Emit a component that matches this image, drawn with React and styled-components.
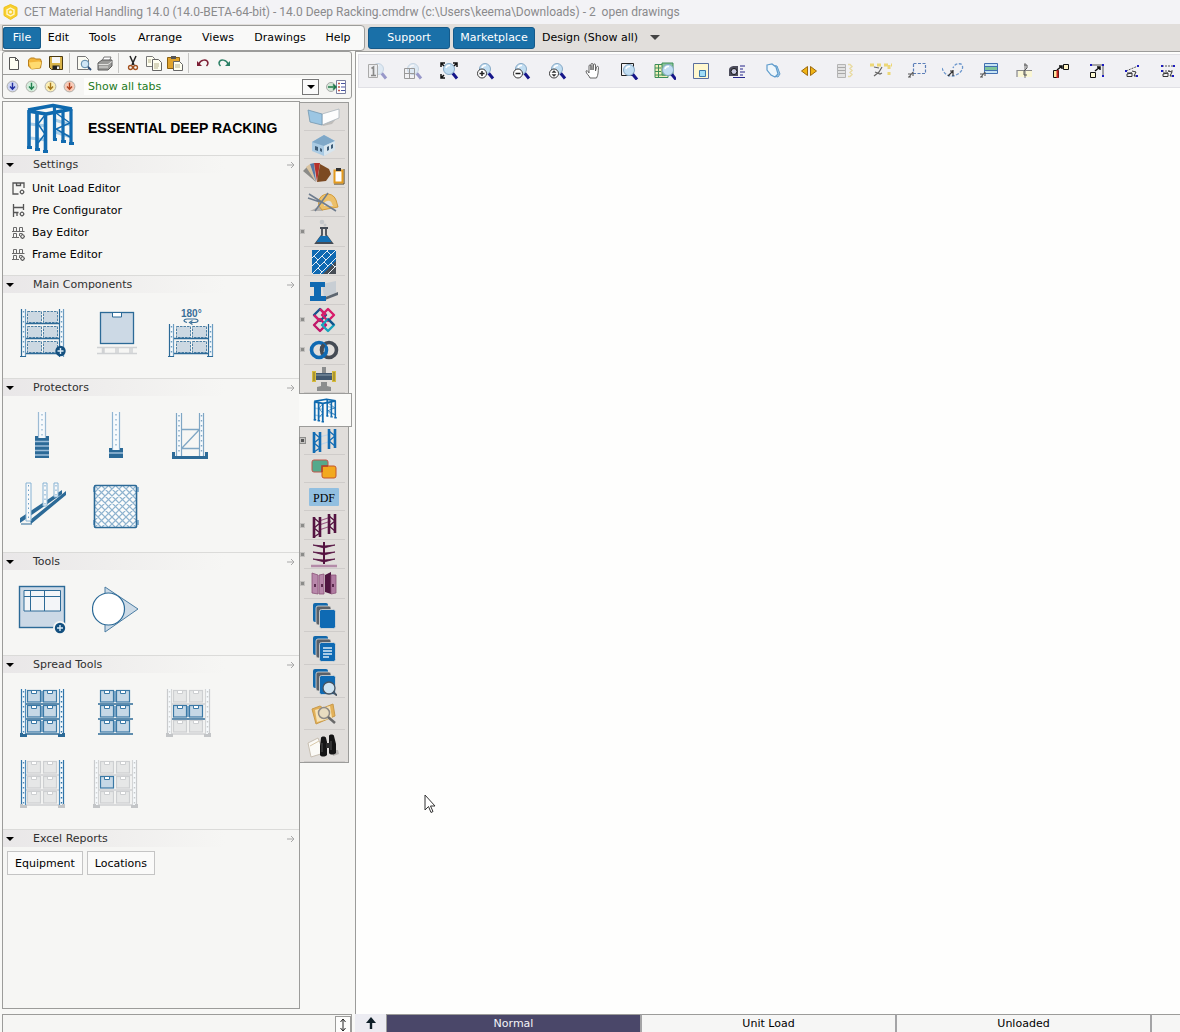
import React from "react";
import styled, { createGlobalStyle } from "styled-components";

const UI_FONT = `"DejaVu Sans", Verdana, sans-serif`;
const LINE = "#9c9c9a";
const BRAND = "#1a70a8";
const PANEL = "#f6f6f4";
const INK = "#2c6a97";
const SOFT = "#c6d8e6";

const GlobalStyle = createGlobalStyle`
  *, *::before, *::after { box-sizing: border-box; }
  body { margin: 0; background: #f8f8f6; font-family: ${UI_FONT}; font-size: 11px; color: #000; overflow: hidden; }
  button, select { font: inherit; color: inherit; background: none; border: 0; margin: 0; padding: 0; }
  h1, h2 { margin: 0; font: inherit; }
  svg { display: block; flex: none; }
`;

/* ---------- layout ---------- */
const Shell = styled.div`
  height: 100vh;
  display: flex;
  flex-direction: column;
`;
const TitleBar = styled.header`
  display: flex;
  align-items: center;
  gap: 6px;
  height: 24px;
  padding: 0 3px;
  background: #f3f3f6;
  color: #8a8a8c;
  font: 12px/24px Roboto, "Open Sans", sans-serif;
  white-space: pre;
`;
const MenuBar = styled.div`
  display: flex;
  align-items: center;
  height: 27px;
  flex: none;
  padding-left: 2px;
  gap: 3px;
  background: #e1dedb;
`;
const Menu = styled.nav`
  display: flex;
  align-items: center;
  height: 26px;
  width: 363px;
  background: #f9f9f8;
  border: 1px solid ${LINE};
  border-radius: 0 4px 4px 0;
`;
const MenuItem = styled.button`
  height: 22px;
  width: ${(p) => p.$w}px;
  text-align: center;
  border-radius: 3px;
  ${(p) => p.$active && `background: ${BRAND}; color: #fff; box-shadow: inset 0 0 0 1px #155a8a;`}
`;
const BarButton = styled.button`
  height: 22px;
  width: 82px;
  color: #fff;
  background: ${BRAND};
  border: 1px solid #155a8a;
  border-radius: 3px;
`;
const PlainSelect = styled.label`
  display: flex;
  align-items: center;
  gap: 12px;
  padding-left: 4px;
  select { appearance: none; field-sizing: content; }
`;
const Workspace = styled.div`
  flex: 1;
  min-height: 0;
  display: flex;
`;
const Side = styled.aside`
  width: 355px;
  flex: none;
  padding: 0 3px 0 2px;
  display: flex;
  flex-direction: column;
`;
const ToolPanel = styled.div`
  flex: none;
  border: 1px solid ${LINE};
  border-radius: 3px;
  background: ${PANEL};
`;
const ToolRow = styled.div`
  display: flex;
  align-items: center;
  height: 22px;
  & + & { border-top: 1px solid ${LINE}; height: 24px; }
`;
const SmallTool = styled.button`
  width: ${(p) => p.$w || 21}px;
  height: 20px;
  display: grid;
  place-items: center;
`;
const Divider = styled.span`
  width: 1px;
  height: 20px;
  margin: 0 3px;
  background: #c6c6c4;
`;
const TabFilter = styled.label`
  display: flex;
  align-items: center;
  flex: 1;
  height: 17px;
  margin: 0 2px 0 5px;
  padding-left: 4px;
  background: #fdfdfb;
  color: #1c7a22;
  select { appearance: none; flex: 1; height: 17px; }
`;
const DropBox = styled.span`
  width: 17px;
  height: 16px;
  display: grid;
  place-items: center;
  border: 1px solid #777;
  background: #fafafa;
`;
const Middle = styled.div`
  flex: 1;
  min-height: 0;
  display: flex;
  align-items: stretch;
  margin-top: 2px;
`;
const Catalog = styled.div`
  width: 298px;
  border: 1px solid ${LINE};
  background: ${PANEL};
`;
const Brand = styled.div`
  display: flex;
  align-items: center;
  height: 53px;
  padding: 0 0 1px 21px;
  gap: 12px;
  background: #f8f8f6;
  h1 { font: bold 14px/20px "Liberation Sans", Arial, sans-serif; }
`;
const SectionHead = styled.button`
  display: flex;
  align-items: center;
  width: 100%;
  height: 18px;
  padding: 0 4px 0 3px;
  border-top: 1px solid #dbdbd9;
  background: linear-gradient(90deg, #e9e7e8 0, #efeeed 35%, ${PANEL} 75%);
  color: #303030;
  span { flex: 1; text-align: left; padding-left: 19px; }
`;
const LinkList = styled.div`
  display: flex;
  flex-direction: column;
  padding: 4px 0 10px 9px;
`;
const LinkRow = styled.button`
  display: flex;
  align-items: center;
  gap: 7px;
  height: 22px;
`;
const IconGrid = styled.div`
  display: grid;
  grid-template-columns: repeat(3, 74px);
  grid-auto-rows: 71px;
  padding: 4px 0 10px 3px;
`;
const IconCell = styled.button`
  display: grid;
  place-items: center;
`;
const ReportRow = styled.div`
  display: flex;
  gap: 4px;
  padding: 4px;
`;
const ReportButton = styled.button`
  height: 24px;
  padding: 0 7px;
  border: 1px solid #c4c4c4;
  background: #fafaf9;
`;
const TabStrip = styled.div`
  width: 49px;
  align-self: flex-start;
  margin-top: 1px;
  background: #e1dedb;
  border: solid ${LINE};
  border-width: 1px 1px 1px 0;
`;
const SideTab = styled.button`
  position: relative;
  display: grid;
  place-items: center;
  width: 48px;
  height: ${(p) => p.$h}px;
  &::after { content: ""; position: absolute; left: 4px; right: 3px; bottom: 0; height: 1px; background: #cfccca; }
  ${(p) =>
    p.$selected &&
    `width: 53px; margin-left: -1px; background: #fafaf8; border: 1px solid ${LINE}; border-left: 0; &::after { display: none; }`}
`;
const Pin = styled.span`
  position: absolute;
  left: 0;
  top: 50%;
  width: 5px;
  height: 5px;
  margin-top: -3px;
  background: #8c8c8a;
  border: 1px solid #c4c2c0;
  ${(p) => p.$boxed && `outline: 1px solid #8c8c8a; background: #555;`}
`;
const StatusBox = styled.div`
  flex: none;
  display: flex;
  justify-content: flex-end;
  height: 18px;
  margin-top: 5px;
  border: 1px solid ${LINE};
  border-bottom: 0;
  background: ${PANEL};
`;
const Stepper = styled.button`
  width: 16px;
  margin-top: 1px;
  border: 1px solid ${LINE};
  border-bottom: 0;
  background: #fdfdfc;
  display: grid;
  place-items: center;
`;
const Main = styled.main`
  flex: 1;
  min-width: 0;
  display: flex;
  flex-direction: column;
  border-top: 1px solid ${LINE};
`;
const Canvas = styled.section`
  position: relative;
  flex: 1;
  min-height: 0;
  padding: 2px 0 0 2px;
  background: #fefefd;
  border-left: 1px solid ${LINE};
`;
const ViewBar = styled.div`
  display: flex;
  align-items: center;
  height: 34px;
  overflow: hidden;
  background: #f1f1f4;
  border: 1px solid #e0e0e5;
  border-right: 0;
`;
const ViewTool = styled.button`
  flex: none;
  width: 36px;
  height: 32px;
  display: grid;
  place-items: center;
`;
const Pointer = styled.span`
  position: absolute;
  left: 68px;
  top: 742px;
`;
const SheetBar = styled.div`
  flex: none;
  display: flex;
  height: 18px;
  overflow: hidden;
`;
const UpButton = styled.button`
  width: 32px;
  flex: none;
  display: grid;
  place-items: center;
  background: #ececf2;
  border-right: 1px solid ${LINE};
`;
const SheetTab = styled.button`
  flex: none;
  width: 255px;
  border-top: 1px solid ${LINE};
  border-right: 2px solid #a4a4a6;
  background: ${(p) => (p.$active ? "#4a4769" : "#f6f6f5")};
  color: ${(p) => (p.$active ? "#f4f4f8" : "#000")};
`;

/* ---------- small drawings ---------- */
const Svg = ({ w = 18, h = w, vb, children }) => (
  <svg width={w} height={h} viewBox={vb || `0 0 ${w} ${h}`} fill="none" aria-hidden="true">
    {children}
  </svg>
);
const Caret = ({ c = "#000", w = 8 }) => (
  <Svg w={w} h={w / 2} vb="0 0 8 4">
    <path d="M0 0h8L4 4z" fill={c} />
  </Svg>
);
const AppLogo = () => (
  <Svg w={15} h={16}>
    <path d="M7.500 .5 14 3.500v8L7.500 15.500 1 11.500v-8z" fill="#f7cf2e" stroke="#efc21c" />
    <path d="M7.500 4 11 6v4l-3.500 2L4 10V6z" stroke="#fff6cc" strokeWidth="1.400" />
    <circle cx="7.500" cy="8" r="1.500" fill="#fff6cc" />
  </Svg>
);

const fileIcons = {
  New: (
    <Svg w={16}>
      <path d="M3.500 2.500h6l3 3v9h-9z" fill="#fffff4" stroke="#555" />
      <path d="M9.500 2.500v3h3" stroke="#555" />
    </Svg>
  ),
  Open: (
    <Svg w={16}>
      <path d="M1.500 5l2-2h4l1 1h5l1 3-1 6-9 1-3-3z" fill="#f3b53a" stroke="#b9801c" />
      <path d="M2 7.500l10-1 2.500 1-2 5.500-8 1z" fill="#ffdb70" />
    </Svg>
  ),
  Save: (
    <Svg w={16}>
      <path d="M1.500 1.500h13v13h-11l-2-2z" fill="#d9b44a" stroke="#4b3a12" />
      <path d="M4 2h8v6H4z" fill="#f6f6f6" />
      <path d="M4.500 10.500h7v4h-7z" fill="#222" />
      <path d="M9 11.500h2v2.500H9z" fill="#eee" />
    </Svg>
  ),
  Preview: (
    <Svg w={16}>
      <path d="M1.500 1.500h8l3 3v10h-11z" fill="#fbfbf2" stroke="#777" />
      <circle cx="9" cy="9" r="3.800" fill="#cfe6f5" stroke="#5b87a8" />
      <path d="M12 12l3 3" stroke="#2f4f78" strokeWidth="2" />
    </Svg>
  ),
  Print: (
    <Svg w={16}>
      <path d="M5 6l2-4h7l-2 5z" fill="#fff" stroke="#777" />
      <path d="M1 8l4-3h10v6l-4 4H1z" fill="#9a9a98" stroke="#5d5d5c" />
      <path d="M1.500 9.500H11l4-3M2 12h9" stroke="#e0e0de" />
    </Svg>
  ),
  Cut: (
    <Svg w={16}>
      <path d="M5 1l4 9M11 1L7 10" stroke="#222" strokeWidth="1.500" />
      <circle cx="5.500" cy="12.500" r="2" stroke="#a3501d" strokeWidth="1.300" />
      <circle cx="10.500" cy="12.500" r="2" stroke="#a3501d" strokeWidth="1.300" />
    </Svg>
  ),
  Copy: (
    <Svg w={16}>
      <path d="M.5 1.500h6l2 2v8h-8z" fill="#fffff0" stroke="#777" />
      <path d="M6.500 4.500h6l3 3v8h-9z" fill="#fffff0" stroke="#666" />
      <path d="M2 5h3M2 7h3M8 9h5M8 11h5M8 13h4" stroke="#b5b08a" />
    </Svg>
  ),
  Paste: (
    <Svg w={16}>
      <path d="M.5 2.500h12v11H.5z" fill="#e0a32c" stroke="#8b6010" />
      <path d="M4 1h5v3H4z" fill="#555" />
      <path d="M6.500 6.500h6l3 3v6h-9z" fill="#fffff0" stroke="#666" />
      <path d="M8 10h5M8 12h5" stroke="#b5b08a" />
    </Svg>
  ),
  Undo: (
    <Svg w={16}>
      <path d="M4 9c1-4 8-6 9-1 0 1-.5 2-1.500 3" stroke="#7d1f35" strokeWidth="1.500" />
      <path d="M2 6v5h5z" fill="#7d1f35" />
    </Svg>
  ),
  Redo: (
    <Svg w={16}>
      <path d="M12 9C11 5 4 3 3 8c0 1 .5 2 1.500 3" stroke="#2d8066" strokeWidth="1.500" />
      <path d="M14 6v5H9z" fill="#2d8066" />
    </Svg>
  ),
};

const Level = ({ fill, stroke }) => (
  <Svg w={13}>
    <circle cx="6.500" cy="6.500" r="5.400" fill={fill} stroke="#b0b0aa" />
    <path d="M6.500 2.800v6M4 6.500l2.500 2.800L9 6.500" stroke={stroke} strokeWidth="1.400" />
  </Svg>
);
const TabListIcon = () => (
  <Svg w={20} h={14}>
    <circle cx="5" cy="7" r="4.500" fill="#d5e8d8" stroke="#aaa" />
    <path d="M10.500 .5h9v13h-9z" fill="#fff" stroke="#7b80a0" />
    <path d="M12 3.500h2M12 7h2M12 10.500h2" stroke="#c0554a" strokeWidth="1.500" />
    <path d="M15 3.500h4M15 7h4M15 10.500h4" stroke="#4a55a0" />
    <path d="M2 7h8M7 4.500L10 7 7 9.500" stroke="#1f7a4a" strokeWidth="1.500" />
  </Svg>
);

const Gear = ({ x = 10, y = 10 }) => (
  <g stroke="#555" strokeWidth="1.100">
    <path d={`M${x - 2.5} ${y}h5M${x} ${y - 2.5}v5`} />
    <circle cx={x} cy={y} r="1.700" fill={PANEL} />
  </g>
);
const BayGlyph = () => (
  <Svg w={13}>
    <path
      d="M1.500 5V1.500h3V5M7.500 5V1.500h3V5M0 5.500h12.500M1.500 11V7.500h3V11M7.500 10V7.500h3M0 11.500h7"
      stroke="#6a6a6a"
    />
    <Gear x={10.5} y={10.5} />
  </Svg>
);
const settings = [
  [
    "Unit Load Editor",
    <Svg w={13}>
      <path d="M6.500 12H1V1h11v5M4.500 1v2.500h4V1" stroke="#555" strokeWidth="1.300" />
      <Gear />
    </Svg>,
  ],
  [
    "Pre Configurator",
    <Svg w={13}>
      <path d="M1.500 0v13M11.500 0v6M1.500 3.500h10M1.500 8.500h5M5 8.500V12" stroke="#555" strokeWidth="1.300" />
      <Gear />
    </Svg>,
  ],
  ["Bay Editor", <BayGlyph />],
  ["Frame Editor", <BayGlyph />],
];

/* ---------- catalog drawings (50 x 50) ---------- */
const Post = ({ x, y = 1, h = 48, c = INK, soft = "#6b9cc0", w = 5 }) => (
  <g>
    <path d={`M${x} ${y}h${w}v${h}h${-w}z`} fill="#f7fafc" />
    <path d={`M${x + 0.5} ${y}v${h}`} stroke={c} strokeWidth="1.200" />
    <path d={`M${x + w - 0.5} ${y}v${h}`} stroke={soft} strokeWidth="1.200" />
    <path d={`M${x + w / 2} ${y + 2}v${h - 3}`} stroke={soft} strokeWidth="1.400" strokeDasharray="1.500 3.500" />
  </g>
);
const DashBox = ({ x, y }) => (
  <rect x={x + 0.5} y={y + 0.5} width="14" height="11" fill="#ccd8e2" stroke="#4f81a5" strokeDasharray="2.500 1" />
);
const Parcel = ({ x, y, on = true }) => {
  const edge = on ? "#3b79a6" : "#cdcfd1";
  return (
    <g>
      <rect x={x + 0.5} y={y + 0.5} width="13" height="11.500" fill={on ? SOFT : "#e6e7e7"} stroke={edge} strokeWidth="1.200" />
      <path d={`M${x + 4.5} ${y + 1}v2.500h5v-2.500`} fill="#fff" stroke={edge} />
    </g>
  );
};
const PlusBadge = ({ x, y }) => (
  <g>
    <circle cx={x} cy={y} r="5.200" fill="#14507f" />
    <path d={`M${x - 3} ${y}h6M${x} ${y - 3}v6`} stroke="#dcebf6" strokeWidth="1.400" />
  </g>
);
const SpreadRack = ({ dx = 0, posts = "grey", lit, frame = true }) => {
  const pc = posts === "blue" ? "#2f74a8" : "#c9cbcd";
  const ps = posts === "blue" ? "#4f8cba" : "#d3d5d6";
  return (
    <Svg w={50}>
      <g transform={`translate(${dx} 0)`}>
        {[2, 17, 32].map((y, r) => (
          <g key={y}>
            {lit(r, 0) && lit(r, 1) && <path d={`M23 ${y + 1}h3v11h-3z`} fill="#7fa9c9" />}
            {[9, 25].map((x, c) => (
              <Parcel key={x} x={x} y={y} on={lit(r, c)} />
            ))}
            <path
              d={`M7 ${y + 14}h35`}
              stroke={lit(r, 0) && lit(r, 1) ? INK : "#cfd1d3"}
              strokeWidth="1.500"
            />
          </g>
        ))}
        {frame && (
          <>
            <Post x={3} c={pc} soft={ps} h={45} />
            <Post x={41} c={ps} soft={pc} h={45} />
            <path d="M2 45h3v1h4v3H2zM47 45h-3v1h-4v3h7z" fill={lit(0, 0) ? INK : "#c3c5c7"} />
          </>
        )}
      </g>
    </Svg>
  );
};

const mainComponents = [
  [
    "Rack",
    <Svg w={50}>
      {[3, 18, 33].map((y) => (
        <g key={y}>
          <DashBox x={9} y={y} />
          <DashBox x={25} y={y} />
          <path d={`M7 ${y + 12.5}h35`} stroke={INK} strokeWidth="1.300" />
        </g>
      ))}
      <Post x={3} />
      <Post x={41} />
      <path d="M2 48.500h6" stroke={INK} />
      <PlusBadge x={42.5} y={43} />
    </Svg>,
  ],
  [
    "Unit load",
    <Svg w={50}>
      <rect x="8.500" y="4.500" width="33" height="31" fill="#ccd9e5" stroke={INK} strokeWidth="1.300" />
      <path d="M20.500 5v4h9V5" fill="#fff" stroke={INK} />
      <path
        d="M5 39.500h40M5 45.500h40M10.500 40v5M12 40v5M24 40v5M26 40v5M38 40v5M40 40v5"
        stroke="#d0d2d4"
        strokeWidth="1.500"
      />
    </Svg>,
  ],
  [
    "Rotate rack",
    <Svg w={50}>
      <text x="15" y="9" fontFamily="Liberation Sans, Arial, sans-serif" fontSize="10" fontWeight="bold" fill="#3a6f98">
        180°
      </text>
      <path d="M21 14.500c-4-1-4-3 0-3.500h8c4 .5 4 3 0 3.500h-4M26.500 12.500l-3 2 3 2" stroke="#3a6f98" strokeWidth="1.200" />
      {[18, 33].map((y) => (
        <g key={y}>
          <DashBox x={10} y={y} />
          <DashBox x={26} y={y} />
          <path d={`M8 ${y + 12.5}h35`} stroke={INK} strokeWidth="1.300" />
        </g>
      ))}
      <Post x={3} y={16} h={33} />
      <Post x={42} y={16} h={33} />
      <path d="M2 48.500h6M41 48.500h6" stroke={INK} />
    </Svg>,
  ],
];

const protectors = [
  [
    "Column guard",
    <Svg w={50}>
      <Post x={20} w={8} h={26} c="#9cbbd4" soft="#9cbbd4" />
      <path d="M17 25h3v2h8v-2h3v22H17z" fill={INK} />
      <path d="M17 30.500h14M17 35h14M17 39.500h14M17 44h14" stroke="#9dbfda" strokeWidth="1.500" />
    </Svg>,
  ],
  [
    "Low column guard",
    <Svg w={50}>
      <Post x={20} w={8} h={38} c="#8fb4d2" soft="#8fb4d2" />
      <path d="M17 37h3v2h8v-2h3v10H17z" fill={INK} />
      <path d="M17 42h14" stroke="#9dbfda" strokeWidth="1.500" />
    </Svg>,
  ],
  [
    "Frame guard",
    <Svg w={50}>
      <path d="M6 41h3v4h30v-4h3v7H6z" fill={INK} />
      <Post x={10} w={6} h={43} c="#7fa6c4" soft="#7fa6c4" y={2} />
      <Post x={33} w={5} h={43} c="#7fa6c4" soft="#7fa6c4" y={2} />
      <path d="M16 18.500h17M16 37.500h17M33 19L16 37" stroke="#7fa6c4" strokeWidth="1.300" />
    </Svg>,
  ],
  [
    "Rail guard",
    <Svg w={50}>
      <path d="M2 36L44 8v4L2 41zM12 38L48 9v4L13 42z" fill={INK} />
      <path d="M3 42h11" stroke={INK} />
      <path d="M8 1h5v38H8zM25 1h4v23h-4zM36 1h4v14h-4z" fill="#fafafa" stroke="#86b2d3" />
      <path d="M10.500 3v35M27 3v20M38 3v11" stroke="#6e9fc4" strokeDasharray="1.500 3" />
    </Svg>,
  ],
  [
    "Mesh guard",
    <Svg w={50}>
      <path d="M1 5h4v5H1zM43 5h4v5h-4zM1 38h4v5H1zM43 38h4v5h-4z" fill="#8db4d2" />
      <rect x="2.500" y="3.500" width="42" height="42" fill="#fbfcfc" />
      <path
        d={[0, 1, 2, 3, 4, 5]
          .map(
            (i) =>
              `M${3 + i * 7} 4L44 ${45 - i * 7}M3 ${4 + i * 7}L${44 - i * 7} 45M${44 - i * 7} 4L3 ${45 - i * 7}M44 ${4 + i * 7}L${3 + i * 7} 45`
          )
          .join("")}
        stroke="#8fb3cf"
        strokeWidth="1.200"
      />
      <rect x="2.500" y="3.500" width="42" height="42" rx="1" stroke={INK} strokeWidth="1.600" />
    </Svg>,
  ],
];

const tools = [
  [
    "Elevation",
    <Svg w={50}>
      <rect x="1.500" y="1.500" width="45" height="41" fill="#ccd9e6" stroke={INK} strokeWidth="1.400" />
      <path d="M6 5.500h36.500V26H6zM6 11.500h36.500M12.500 5.500V26M26.500 5.500V26" fill="#f3f5f8" stroke={INK} />
      <circle cx="42" cy="43" r="7" fill={PANEL} />
      <PlusBadge x={42} y={43} />
    </Svg>,
  ],
  [
    "View direction",
    <Svg w={50}>
      <path d="M13 2l33 22-33 23z" fill="#ccdae6" stroke="#4b7da3" strokeLinejoin="round" />
      <circle cx="16.500" cy="24" r="16" fill="#fff" stroke={INK} strokeWidth="1.200" />
    </Svg>,
  ],
];

const spreadTools = [
  ["Full rack", <SpreadRack posts="blue" lit={() => true} />],
  ["Loads only", <SpreadRack frame={false} dx={-1} lit={() => true} />],
  ["Level", <SpreadRack dx={-2} lit={(r) => r === 1} />],
  ["Frames", <SpreadRack posts="blue" lit={() => false} />],
  ["Single load", <SpreadRack dx={-1} lit={(r, c) => r === 1 && c === 0} />],
];

/* ---------- racking marks ---------- */
const RackMark = ({ w, h }) => (
  <Svg w={w} h={h} vb="0 0 48 51">
    <path d="M4 21l16 2M4 35l16 2M29 17l16 5M29 29l16 5" stroke="#a9cde6" strokeWidth="3" />
    <path d="M2 7L27 2.500 46 6M2 8l18 3L46 6" stroke="#0e69ae" strokeWidth="3.500" strokeLinejoin="round" />
    <path d="M3 7v39M11 9v38M19.500 11v38" stroke="#126bb0" strokeWidth="3.600" />
    <path d="M28.500 4v33M37 8v30M45 6v34" stroke="#126bb0" strokeWidth="3.200" />
    <path d="M19 12l-7 9 7 10-7 9M30 10l14 10-14 6 14 8" stroke="#126bb0" strokeWidth="1.500" />
    <path d="M1 43h5v3H1zM9 45h5v3H9zM17 47h5v3h-5zM27 35h4v3h-4zM35 37h5v3h-5zM43 39h5v3h-5z" fill="#126bb0" />
  </Svg>
);
const Frames = ({ c, beams, soft }) => (
  <Svg w={26}>
    {beams && <path d="M8 8l12-4M8 12l12-4M8 17l12-4" stroke={soft} strokeWidth="1.300" />}
    {!beams && <path d="M8 9l12-3M8 17l12-4" stroke={soft} strokeWidth="1.200" />}
    <path d="M3 4v21M9 4v20M18 1v20M24 1v19" stroke={c} strokeWidth="2.600" />
    <path d="M3 5l6 5-6 5 6 5-6 4M18 3l6 5-6 5 6 5" stroke={c} strokeWidth="1.300" />
  </Svg>
);
const Stack = ({ children }) => (
  <Svg w={26} h={28}>
    <rect x="2" y="1" width="15" height="19" rx="2" fill="#1268ab" />
    <rect x="5" y="4" width="15" height="19" rx="2" fill="#5a6068" stroke="#e1dedb" strokeWidth=".8" />
    <rect x="8.500" y="7.500" width="16" height="19" rx="2" fill="#0f6ab3" stroke="#e1dedb" strokeWidth=".8" />
    {children}
  </Svg>
);

const sideTabs = [
  [
    "Walls",
    28,
    <Svg w={34} h={20}>
      <path d="M15 17l14-5-4 5-9 2z" fill="#bfbdba" />
      <path d="M15 7l17-5v9l-17 7z" fill="#fdfdfd" stroke="#a9b4bb" strokeWidth=".8" />
      <path d="M1 3l14 4v11L3 15z" fill="#9cc6e3" stroke="#7297b0" strokeWidth=".8" />
    </Svg>,
  ],
  [
    "Buildings",
    28,
    <Svg w={28} h={22}>
      <path d="M2 8L14 1l11 6v8l-11 7-12-5z" fill="#a9cae3" />
      <path d="M2 8L14 1l11 6-11 5z" fill="#7fa8c8" />
      <path d="M14 12l11-5v9l-11 6z" fill="#d8e6ef" />
      <path d="M5 12l3 1v4l-3-1zM10 14l2 1v3l-2-1zM17 13l2-1v4l-2 1zM21 11l2-1v4l-2 1z" fill="#3f5e79" />
    </Svg>,
  ],
  [
    "Materials",
    29,
    <Svg w={42} h={24}>
      <path d="M13 20L0 9l4-4z" fill="#8b8b88" />
      <path d="M13 20L3 5l4-3z" fill="#d9c3a0" />
      <path d="M13 20L7 2l4-1z" fill="#5878a4" />
      <path d="M14 20L11 1l6 0z" fill="#b5312a" />
      <path d="M14 20L17 2l9 5 2 5-5 7z" fill="#7c4a22" />
      <path d="M41 7v15H31" stroke="#4a3a1a" />
      <rect x="31.500" y="8.500" width="8" height="12" fill="#fff" stroke="#e39a1e" strokeWidth="2" />
      <path d="M33 6h5v3h-5z" fill="#333" />
    </Svg>,
  ],
  [
    "Measure",
    29,
    <Svg w={34} h={24}>
      <path d="M3 20h13l-3-5z" fill="#b4b1ae" />
      <path d="M12 15A9 9 0 0 1 29 9l2 7-16 3z" fill="#ecc06a" stroke="#d39b38" />
      <path d="M17 15a4 4 0 0 1 8-2l1 2z" fill="#e1dedb" />
      <path d="M2 3l27 17M8 20L21 2M1 7l12 4" stroke="#6e7c8e" strokeWidth="1.500" />
    </Svg>,
  ],
  [
    "Lab",
    30,
    <Svg w={22} h={26}>
      <path d="M7 9h8M9 9v7l-6 8h16l-6-8V9" stroke="#454c56" strokeWidth="1.800" />
      <path d="M7.500 17h7l4 6H3.500z" fill="#1470b5" />
      <circle cx="9" cy="3" r="2.300" fill="#c5c8cb" />
      <circle cx="12" cy="6" r="1.500" fill="#c5c8cb" />
    </Svg>,
    1,
  ],
  [
    "Flooring",
    29,
    <Svg w={26}>
      <path d="M1 1h24v24H1z" fill="#0f69b2" />
      <path d="M25 12v13H12z" fill="#474d55" />
      <path
        d="M1 9l8-8M1 17L17 1M1 25L25 1M9 25L25 9M17 25l8-8M3 7l4 4M11 7l4 4M5 13l4 4M16 2l4 4M13 13l4 4M20 14l4 4M7 19l4 4"
        stroke="#e6edf3"
      />
    </Svg>,
  ],
  [
    "Steel",
    29,
    <Svg w={30} h={24}>
      <path d="M13 5l14-3v12l-12 4z" fill="#c8ced4" />
      <path d="M14 19l15-6v3l-13 5z" fill="#5d6670" />
      <path d="M1 3h15v5h-4v9h5v5H1v-5h4V8H1z" fill="#0f69b2" />
    </Svg>,
  ],
  [
    "Links",
    30,
    <Svg w={26}>
      <g strokeWidth="2.400" strokeLinejoin="round">
        <path d="M9 2l6 6-6 6-6-6z" stroke="#14538c" />
        <path d="M17 2l6 6-6 6-6-6z" stroke="#d81b6a" />
        <path d="M9 12l6 6-6 6-6-6z" stroke="#c0186a" />
        <path d="M17 12l6 6-6 6-6-6z" stroke="#18a3bd" />
        <path d="M9 2l6 6M9 14l-6-6" stroke="#d81b6a" />
        <path d="M23 18l-6-6" stroke="#14538c" />
      </g>
    </Svg>,
    1,
  ],
  [
    "Rings",
    30,
    <Svg w={30} h={20}>
      <circle cx="20" cy="10" r="7.500" stroke="#454b54" strokeWidth="3.600" />
      <circle cx="10" cy="10" r="7.500" stroke="#0f69b2" strokeWidth="3.600" />
      <path d="M15 4.500a7.500 7.500 0 0 0-2 7" stroke="#454b54" strokeWidth="3.600" />
    </Svg>,
    1,
  ],
  [
    "Conveyor",
    28,
    <Svg w={28} h={24}>
      <path d="M12 0h4v6h-4zM11 15h6v4l4 1v4H7v-4l4-1z" fill="#8b8d8e" />
      <rect x="5" y="6" width="18" height="7" fill="#42586f" />
      <path d="M6 8h16" stroke="#8b9eae" />
      <path d="M2 4h4v11H2zM22 4h4v11h-4z" fill="#d8bc3c" />
      <path d="M4 5v9M24 5v9" stroke="#7d7030" />
    </Svg>,
  ],
  ["Deep racking", 34, <RackMark w={24} h={25} />, 0, true],
  ["Pallet racking", 28, <Frames c="#136db4" soft="#bcd5e8" />, 2],
  [
    "Chips",
    28,
    <Svg w={28} h={22}>
      <rect x="2" y="2" width="16" height="12" rx="2" fill="#56a98c" stroke="#c0564b" />
      <rect x="12" y="8" width="14" height="12" rx="2" fill="#f2a91f" stroke="#c4552a" />
      <path d="M12 14V8h6" stroke="#b0422f" strokeWidth="1.500" />
    </Svg>,
  ],
  [
    "PDF",
    28,
    <Svg w={30} h={19}>
      <rect width="30" height="18" rx="1" fill="#92bfe0" />
      <text x="15" y="14" textAnchor="middle" fontFamily="Liberation Serif, serif" fontSize="12" fill="#000">
        PDF
      </text>
    </Svg>,
  ],
  ["Shelving", 29, <Frames c="#541341" soft="#9a5c86" beams />, 1],
  [
    "Cantilever",
    29,
    <Svg w={28} h={26}>
      <path d="M14 0v22" stroke="#541341" strokeWidth="2" />
      <path d="M3 3l11 1 11-1-11 3zM3 10l11 1 11-1-11 3zM3 17l11 1 11-1-11 3z" fill="#541341" stroke="#541341" strokeWidth=".8" />
      <path d="M1 24h26" stroke="#b48ba8" strokeWidth="2.500" />
    </Svg>,
    1,
  ],
  [
    "Lockers",
    30,
    <Svg w={28} h={26}>
      <path d="M2 2l6 2v19l-6-1zM9 4l5-1v20l-5 0z" fill="#b888ab" stroke="#8a5479" strokeWidth=".8" />
      <path d="M15 4l6-3v22l-6-2z" fill="#4f1540" />
      <path d="M21 4h5v18l-5 1z" fill="#b07ba1" stroke="#8a5479" strokeWidth=".8" />
      <path d="M5 13v3M12 13v3M23 13v3" stroke="#3c0f31" strokeWidth="1.500" />
    </Svg>,
    1,
  ],
  ["Sheets", 33, <Stack />],
  [
    "Documents",
    33,
    <Stack>
      <path d="M12 13h9M12 16h9M12 19h9M12 22h6" stroke="#dcecf8" strokeWidth="1.500" />
    </Stack>,
  ],
  [
    "Find sheets",
    33,
    <Stack>
      <circle cx="18" cy="20" r="6" fill="#cfe3f0" stroke="#475462" strokeWidth="1.300" />
      <path d="M22 24l4 3.500" stroke="#475462" strokeWidth="2" />
    </Stack>,
  ],
  [
    "Browse",
    32,
    <Svg w={28} h={24}>
      <path d="M2 7l8-3 3 2 10-4 2 12-19 8z" fill="#e3b159" stroke="#c99a4a" />
      <path d="M5 8l15-4 2 12-15 4z" fill="#f6e3b8" />
      <circle cx="14" cy="11" r="5.500" fill="#e8dcc0" stroke="#8e8a86" strokeWidth="1.500" />
      <path d="M18 15l7 6" stroke="#6a6a6a" strokeWidth="2.500" />
    </Svg>,
  ],
  [
    "Search",
    32,
    <Svg w={34} h={24}>
      <path d="M1 9l10-5 6 15-13 4z" fill="#fbfaf6" stroke="#c8bfb2" />
      <path d="M3 12l9-5" stroke="#d8c8a8" />
      <path d="M25 16h6l1 4-6 2z" fill="#b8b5b2" />
      <path
        d="M14 4c0-2 5-2 5 0l1 4v13c-2 2-6 2-7 0v-9zM22 2c0-2 5-2 5 0l2 8v9c-2 2-6 2-7 0z"
        fill="#151515"
      />
      <path d="M19 9h4v5h-4z" fill="#2c2c2c" />
      <path d="M15 9v9M24 7v9" stroke="#555" />
    </Svg>,
  ],
];

/* ---------- view toolbar ---------- */
const Lens = ({ x = 9, y = 7, faded }) => (
  <g opacity={faded ? 0.4 : 1}>
    <path d={`M${x + 3.5} ${y + 4}l4.500 5.500`} stroke="#16168a" strokeWidth="3" />
    <circle cx={x} cy={y} r="5.500" fill="#c2def2" stroke="#86a9c6" />
    <path d={`M${x - 3} ${y - 1}a3.500 3.500 0 0 1 4-2.500`} stroke="#fff" strokeWidth="1.500" />
  </g>
);
const Sign = ({ children }) => (
  <g stroke="#222">
    <circle cx="6" cy="11.500" r="4.500" fill="#fff" strokeWidth=".9" />
    {children}
  </g>
);
const Knot = ({ x, y }) => <path d={`M${x - 1} ${y - 1}h2v2h-2z`} fill="#1c1cc0" />;
const viewTools = [
  [
    "Zoom 1:1",
    <>
      <Lens x={10} faded />
      <path d="M.5 2.500h9v13h-9z" fill="#eeeeef" fillOpacity=".8" stroke="#aaa" />
      <path d="M3.500 6.500l2-1.500v8.500M3 13.500h5" stroke="#888" strokeWidth="1.600" />
    </>,
  ],
  [
    "Zoom grid",
    <>
      <Lens x={9} faded />
      <path d="M.5 6.500h10v10H.5zM5.500 6.500v10M.5 11.500h10" stroke="#999" />
    </>,
  ],
  [
    "Zoom extents",
    <>
      <Lens />
      <path d="M1 5V1h4M1 1l3 3M17 5V1h-4M17 1l-3 3M1 12v4h4M1 16l3-3" stroke="#111" strokeWidth="1.500" />
    </>,
  ],
  ["Zoom in", <><Lens x={9} /><Sign><path d="M3.500 11.500h5M6 9v5" strokeWidth="1.500" /></Sign></>],
  ["Zoom out", <><Lens x={9} /><Sign><path d="M3.500 11.500h5" strokeWidth="1.500" /></Sign></>],
  [
    "Zoom step",
    <><Lens x={9} /><Sign><path d="M4 10.500l2-2 2 2zM4 12.500l2 2 2-2z" fill="#222" strokeWidth=".4" /></Sign></>,
  ],
  [
    "Pan",
    <path
      d="M6 16c-1-3-4-4-4-7 1-1 2 0 3 2V4c0-1.500 2-1.500 2 0v4-5.500c0-1.500 2-1.500 2 0V8l.5-5c0-1.500 2-1.500 2 0V9l1-4c.5-1 2-1 2 .5-.5 4 0 7-2 10.500z"
      fill="#fff"
      stroke="#555"
      strokeWidth=".9"
    />,
  ],
  ["Zoom window", <><path d="M1.500 1.500h12v12h-12z" stroke="#222" /><Lens x={9} y={8} /></>],
  [
    "Zoom sheet",
    <>
      <path d="M-1 2.500h13v13H-1z" fill="#f3f0b8" stroke="#3d8e5a" />
      <path d="M-1 6h6M-1 9.500h6M-1 13h13M2.500 3v12" stroke="#3d8e5a" />
      <path d="M6 1h11v12H6z" fill="#8cc79a" stroke="#3d8e5a" />
      <Lens x={12} y={8} />
    </>,
  ],
  [
    "Overview",
    <>
      <path d="M1.500 1.500h15v15h-15z" fill="#fff8cf" stroke="#5a6f9e" />
      <path d="M7.500 8.500h6v6h-6z" fill="#9fdcf6" stroke="#3b78aa" />
    </>,
  ],
  [
    "Snapshot",
    <>
      <path d="M1 14V8c0-3 3-4 5-4h4v10z" fill="#4d4d5c" />
      <circle cx="6" cy="9.500" r="3" fill="#c9cbe0" stroke="#111" />
      <path d="M12 4h5M12 7h3M12 10h5M12 13h3M5 15.500h12" stroke="#25258a" />
    </>,
  ],
  [
    "Eraser",
    <>
      <path d="M7 3l6 1 3 8-2 3-4-1z" fill="#a9cfe9" stroke="#5f9ccc" />
      <path d="M3 3l5-1 4 3 2 7-3 3-4-2-4-5z" fill="#eef6fb" stroke="#5f9ccc" strokeWidth="1.200" />
    </>,
  ],
  ["Flip", <path d="M7.500 4.500v9L1.500 9zM10.500 4.500v9l6-4.500z" fill="#f0b415" stroke="#9c6a10" />],
  [
    "List",
    <>
      <path d="M1.500 2.500h8v13h-8z" fill="#e2e2e2" stroke="#b4b4b4" />
      <path d="M2 5.500h7M2 8.500h7M2 11.500h7" stroke="#a8a8a8" />
      <path d="M12 2.500h2l2 2-2 2 2 2-2 2 2 2-2 2h-2" stroke="#e8dba4" strokeWidth="1.500" />
    </>,
  ],
  [
    "Snap chain",
    <>
      <path d="M-2 3h22M17 3v10" stroke="#ecd777" strokeWidth="3" strokeDasharray="4 3" />
      <path d="M2 5l5 1M2 14l5-4 3-5M3 10l5 2 2-1" stroke="#666" strokeWidth="1.200" />
    </>,
  ],
  [
    "Select box",
    <>
      <path d="M5.500 1.500h12v10h-12z" stroke="#5c7fb8" strokeWidth="1.200" strokeDasharray="3 1.500" />
      <path d="M0 12h3M1 15l4-5M5 10v4M0 15h3" stroke="#555" strokeWidth="1.100" />
    </>,
  ],
  [
    "Select lasso",
    <>
      <path d="M-2 6c3 9 10 9 14 7 7-3 8-9 5-11-4-1-7 1-8 4" stroke="#6b96cc" strokeWidth="1.300" strokeDasharray="3 1.500" />
      <path d="M4 14l5-5M9 8v6M9 9H6" stroke="#333" strokeWidth="1.200" />
    </>,
  ],
  [
    "Select layer",
    <>
      <path d="M4.500 1.500h13v10h-13z" fill="#c6e4f4" stroke="#426fb0" />
      <path d="M5 5h12v3H5z" fill="#80c59a" />
      <path d="M5 4.500h12M5 8.500h12" stroke="#426fb0" />
      <path d="M0 12h3M1 15l4-5M5 10v4M0 15h3" stroke="#555" strokeWidth="1.100" />
    </>,
  ],
  [
    "Align",
    <>
      <path d="M2 8h14v7H2z" fill="#faf6d4" />
      <path d="M1 15V8.500h15M9 1v15" stroke="#888" strokeWidth="1.200" />
      <path d="M8 3h3v3l-3 3v4h3" stroke="#555" />
    </>,
  ],
  [
    "Copy along",
    <>
      <path d="M1.500 8.500h5v7h-5z" fill="#ffe9a0" stroke="#111" />
      <path d="M4.500 8h2v8h-2z" fill="#c22" />
      <path d="M11.500 2.500h5v5h-5z" fill="#fff3c4" stroke="#111" />
      <path d="M5 8l5-4M7 4h3v3" stroke="#111" strokeWidth="1.500" />
    </>,
  ],
  [
    "Stretch",
    <>
      <path d="M2.500 10.500h5v5h-5z" fill="#fffbd4" stroke="#111" />
      <path d="M7 9l5-4M9 5h3v3" stroke="#111" strokeWidth="1.500" />
      <path d="M3 3h12v12" stroke="#555" />
      <Knot x={3} y={3} /><Knot x={15} y={3} /><Knot x={15} y={14} />
    </>,
  ],
  [
    "Rotate",
    <>
      <path d="M2 9L14 4" stroke="#555" strokeDasharray="2 1" />
      <path d="M3 11h5v3.500H3V12l5-1M8 9l4 1-2 4h4" stroke="#333" />
      <Knot x={2} y={9} /><Knot x={14} y={4} /><Knot x={13} y={14} />
    </>,
  ],
  [
    "Distribute",
    <>
      <path d="M2 4h12M2 9h11" stroke="#555" strokeDasharray="2 1" />
      <path d="M3 11h5v3.500H3V12l5-1M8 9l4 1-2 4h4" stroke="#333" />
      <Knot x={2} y={4} /><Knot x={14} y={4} /><Knot x={2} y={9} /><Knot x={13} y={14} />
    </>,
  ],
];

/* ---------- composition ---------- */
const Section = ({ title, children }) => (
  <section>
    <h2>
      <SectionHead>
        <Caret />
        <span>{title}</span>
        <Svg w={8} h={8}>
          <path d="M0 4h7M4 1l3 3-3 3" stroke="#a8a8a8" />
        </Svg>
      </SectionHead>
    </h2>
    {children}
  </section>
);
const Icons = ({ items }) => (
  <IconGrid>
    {items.map(([name, art]) => (
      <IconCell key={name} aria-label={name}>
        {art}
      </IconCell>
    ))}
  </IconGrid>
);

const menus = [
  ["File", 38],
  ["Edit", 35],
  ["Tools", 53],
  ["Arrange", 62],
  ["Views", 54],
  ["Drawings", 70],
  ["Help", 46],
];
const fileGroups = [["New", "Open", "Save"], ["Preview", "Print"], ["Cut", "Copy", "Paste"], ["Undo", "Redo"]];

export default function App() {
  return (
    <Shell>
      <GlobalStyle />
      <TitleBar>
        <AppLogo />
        <span>{"CET Material Handling 14.0 (14.0-BETA-64-bit) - 14.0 Deep Racking.cmdrw (c:\\Users\\keema\\Downloads) - 2  open drawings"}</span>
      </TitleBar>
      <MenuBar>
        <Menu>
          {menus.map(([m, w], i) => (
            <MenuItem key={m} $w={w} $active={i === 0}>{m}</MenuItem>
          ))}
        </Menu>
        <BarButton>Support</BarButton>
        <BarButton>Marketplace</BarButton>
        <PlainSelect>
          <select aria-label="Workspace">
            <option>Design (Show all)</option>
          </select>
          <Caret c="#444" w={10} />
        </PlainSelect>
      </MenuBar>
      <Workspace>
        <Side>
          <ToolPanel>
            <ToolRow>
              {fileGroups.map((g, i) => (
                <React.Fragment key={i}>
                  {i > 0 && <Divider />}
                  {g.map((n) => (
                    <SmallTool key={n} aria-label={n}>{fileIcons[n]}</SmallTool>
                  ))}
                </React.Fragment>
              ))}
            </ToolRow>
            <ToolRow>
              <SmallTool $w={19} aria-label="Level 1"><Level fill="#cfd6f2" stroke="#2330a0" /></SmallTool>
              <SmallTool $w={19} aria-label="Level 2"><Level fill="#d2eddb" stroke="#23804f" /></SmallTool>
              <SmallTool $w={19} aria-label="Level 3"><Level fill="#fbeeb4" stroke="#a8791b" /></SmallTool>
              <SmallTool $w={19} aria-label="Level 4"><Level fill="#f8cbb8" stroke="#b0431f" /></SmallTool>
              <TabFilter>
                <select aria-label="Tab filter">
                  <option>Show all tabs</option>
                </select>
                <DropBox><Caret /></DropBox>
              </TabFilter>
              <SmallTool $w={30} aria-label="Tab list"><TabListIcon /></SmallTool>
            </ToolRow>
          </ToolPanel>
          <Middle>
            <Catalog>
              <Brand>
                <RackMark w={52} h={51} />
                <h1>ESSENTIAL DEEP RACKING</h1>
              </Brand>
              <Section title="Settings">
                <LinkList>
                  {settings.map(([name, art]) => (
                    <LinkRow key={name}>{art}{name}</LinkRow>
                  ))}
                </LinkList>
              </Section>
              <Section title="Main Components"><Icons items={mainComponents} /></Section>
              <Section title="Protectors"><Icons items={protectors} /></Section>
              <Section title="Tools"><Icons items={tools} /></Section>
              <Section title="Spread Tools"><Icons items={spreadTools} /></Section>
              <Section title="Excel Reports">
                <ReportRow>
                  <ReportButton>Equipment</ReportButton>
                  <ReportButton>Locations</ReportButton>
                </ReportRow>
              </Section>
            </Catalog>
            <TabStrip>
              {sideTabs.map(([name, h, art, pin, selected]) => (
                <SideTab key={name} $h={h} $selected={selected} aria-label={name}>
                  {pin ? <Pin $boxed={pin === 2} /> : null}
                  {art}
                </SideTab>
              ))}
            </TabStrip>
          </Middle>
          <StatusBox>
            <Stepper aria-label="Resize">
              <Svg w={8} h={14}>
                <path d="M4 1v12M1.500 4L4 1l2.500 3M1.500 10L4 13l2.500-3" stroke="#222" />
              </Svg>
            </Stepper>
          </StatusBox>
        </Side>
        <Main>
          <Canvas>
            <ViewBar>
              {viewTools.map(([name, art]) => (
                <ViewTool key={name} aria-label={name}>
                  <Svg w={22} h={18} vb="-2 0 22 18">{art}</Svg>
                </ViewTool>
              ))}
            </ViewBar>
            <Pointer>
              <Svg w={12} h={20}>
                <path d="M1 1v15l3.500-3.500 2.500 6 2-1-2.500-5.500H11z" fill="#fff" stroke="#333" />
              </Svg>
            </Pointer>
          </Canvas>
          <SheetBar>
            <UpButton aria-label="Up">
              <Svg w={10} h={12}>
                <path d="M5 12V4" stroke="#0f1f28" strokeWidth="2.400" />
                <path d="M0 6l5-6 5 6z" fill="#0f1f28" />
              </Svg>
            </UpButton>
            <SheetTab $active>Normal</SheetTab>
            <SheetTab>Unit Load</SheetTab>
            <SheetTab>Unloaded</SheetTab>
            <SheetTab aria-label="More" />
          </SheetBar>
        </Main>
      </Workspace>
    </Shell>
  );
}
